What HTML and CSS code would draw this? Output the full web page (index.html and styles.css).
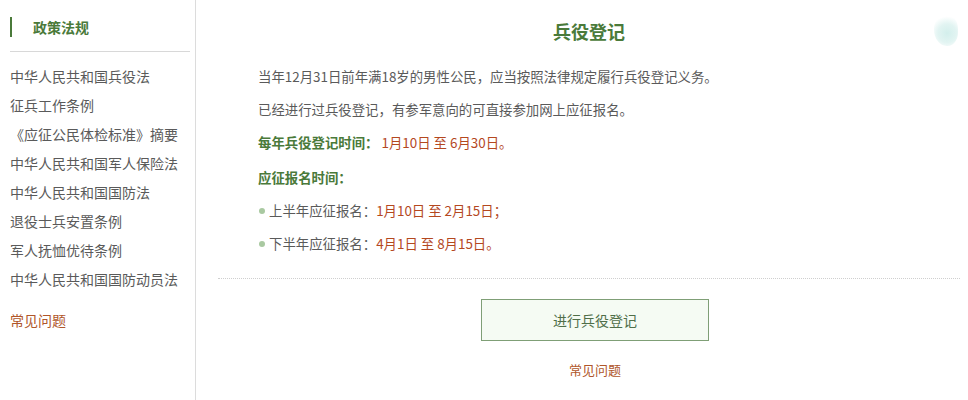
FILE: index.html
```html
<!DOCTYPE html>
<html lang="zh-CN">
<head>
  <meta charset="UTF-8" />
  <meta name="viewport" content="width=device-width, initial-scale=1.0"/>
  <title>兵役登记</title>
  <link rel="stylesheet" href="styles.css">
</head>
<body>

  <div class="page">
    <div class="side">
      <h3 class="side-title"><span>政策法规</span></h3>
      <ul class="side-list">
        <li>中华人民共和国兵役法</li>
        <li>征兵工作条例</li>
        <li>《应征公民体检标准》摘要</li>
        <li>中华人民共和国军人保险法</li>
        <li>中华人民共和国国防法</li>
        <li>退役士兵安置条例</li>
        <li>军人抚恤优待条例</li>
        <li>中华人民共和国国防动员法</li>
      </ul>
      <div class="side-faq">常见问题</div>
    </div>

    <div class="main">
      <div class="blob"></div>
      <h2 class="title">兵役登记</h2>
      <div class="info">
        <div class="row">当年12月31日前年满18岁的男性公民，应当按照法律规定履行兵役登记义务。</div>
        <div class="row">已经进行过兵役登记，有参军意向的可直接参加网上应征报名。</div>
        <div class="row"><b>每年兵役登记时间：</b> <span class="date">1月10日 至 6月30日。</span></div>
        <div class="row gap"><b>应征报名时间：</b></div>
        <div class="row dot">上半年应征报名：<span class="date">1月10日 至 2月15日；</span></div>
        <div class="row dot">下半年应征报名：<span class="date">4月1日 至 8月15日。</span></div>
      </div>
      <div class="actions">
        <button class="btn">进行兵役登记</button>
        <div class="faq">常见问题</div>
      </div>
    </div>
  </div>

</body>
</html>
```

FILE: styles.css
```css
body {
  margin: 0;
  font-family: "Noto Sans CJK SC", "Noto Sans", sans-serif;
  background: #fff;
  color: #5a5a5a;
}
.page {
  display: flex;
  height: 400px;
}
.side {
  width: 180px;
  padding: 0 5px 0 10px;
  border-right: 1px solid #dcdcdc;
  flex-shrink: 0;
}
.side-title {
  margin: 0;
  padding: 17px 0 14px;
  border-bottom: 1px solid #d8d8d8;
}
.side-title span {
  display: block;
  border-left: 2px solid #4a7a3a;
  padding-left: 21px;
  height: 20px;
  line-height: 20px;
  font-size: 14px;
  font-weight: bold;
  color: #4a7a3a;
}
.side-list {
  list-style: none;
  margin: 10px 0 0;
  padding: 0;
}
.side-list li {
  font-size: 14px;
  line-height: 29px;
  color: #5a5a5a;
  white-space: nowrap;
}
.side-faq {
  margin-top: 12px;
  font-size: 14px;
  line-height: 29px;
  color: #b0562a;
}
.main {
  flex: 1;
  position: relative;
  padding: 0 8px 0 22px;
}
.blob {
  position: absolute;
  right: 10px;
  top: 14px;
  width: 24px;
  height: 32px;
  border-radius: 50% 50% 45% 55%;
  background: radial-gradient(circle at 55% 60%, #d3efec 0%, #e2f4f2 40%, rgba(240, 250, 249, 0) 72%);
}
.title {
  margin: 0;
  padding-top: 16px;
  line-height: 30px;
  font-size: 18px;
  font-weight: bold;
  color: #4a7a3a;
  text-align: center;
}
.info {
  margin-top: 14px;
  padding-left: 40px;
  padding-bottom: 18px;
  border-bottom: 1px dotted #cfcfcf;
}
.row {
  font-size: 13.4px;
  line-height: 33px;
  white-space: nowrap;
}
.row.gap {
  margin-top: 2px;
}
.row b {
  color: #4a7a3a;
}
.date {
  color: #b4481f;
}
.dot::before {
  content: "";
  display: inline-block;
  width: 6px;
  height: 6px;
  border-radius: 50%;
  background: #a9c9a1;
  margin: 0 4px 2px 1px;
  vertical-align: middle;
}
.actions {
  display: flex;
  flex-direction: column;
  align-items: center;
  padding-left: 12px;
}
.btn {
  margin-top: 20px;
  width: 228px;
  height: 42px;
  background: #f5fbf3;
  border: 1px solid #7f9f76;
  font-family: inherit;
  font-size: 14px;
  color: #4f6e48;
}
.faq {
  margin-top: 19px;
  font-size: 13px;
  line-height: 20px;
  color: #b0562a;
}
```
